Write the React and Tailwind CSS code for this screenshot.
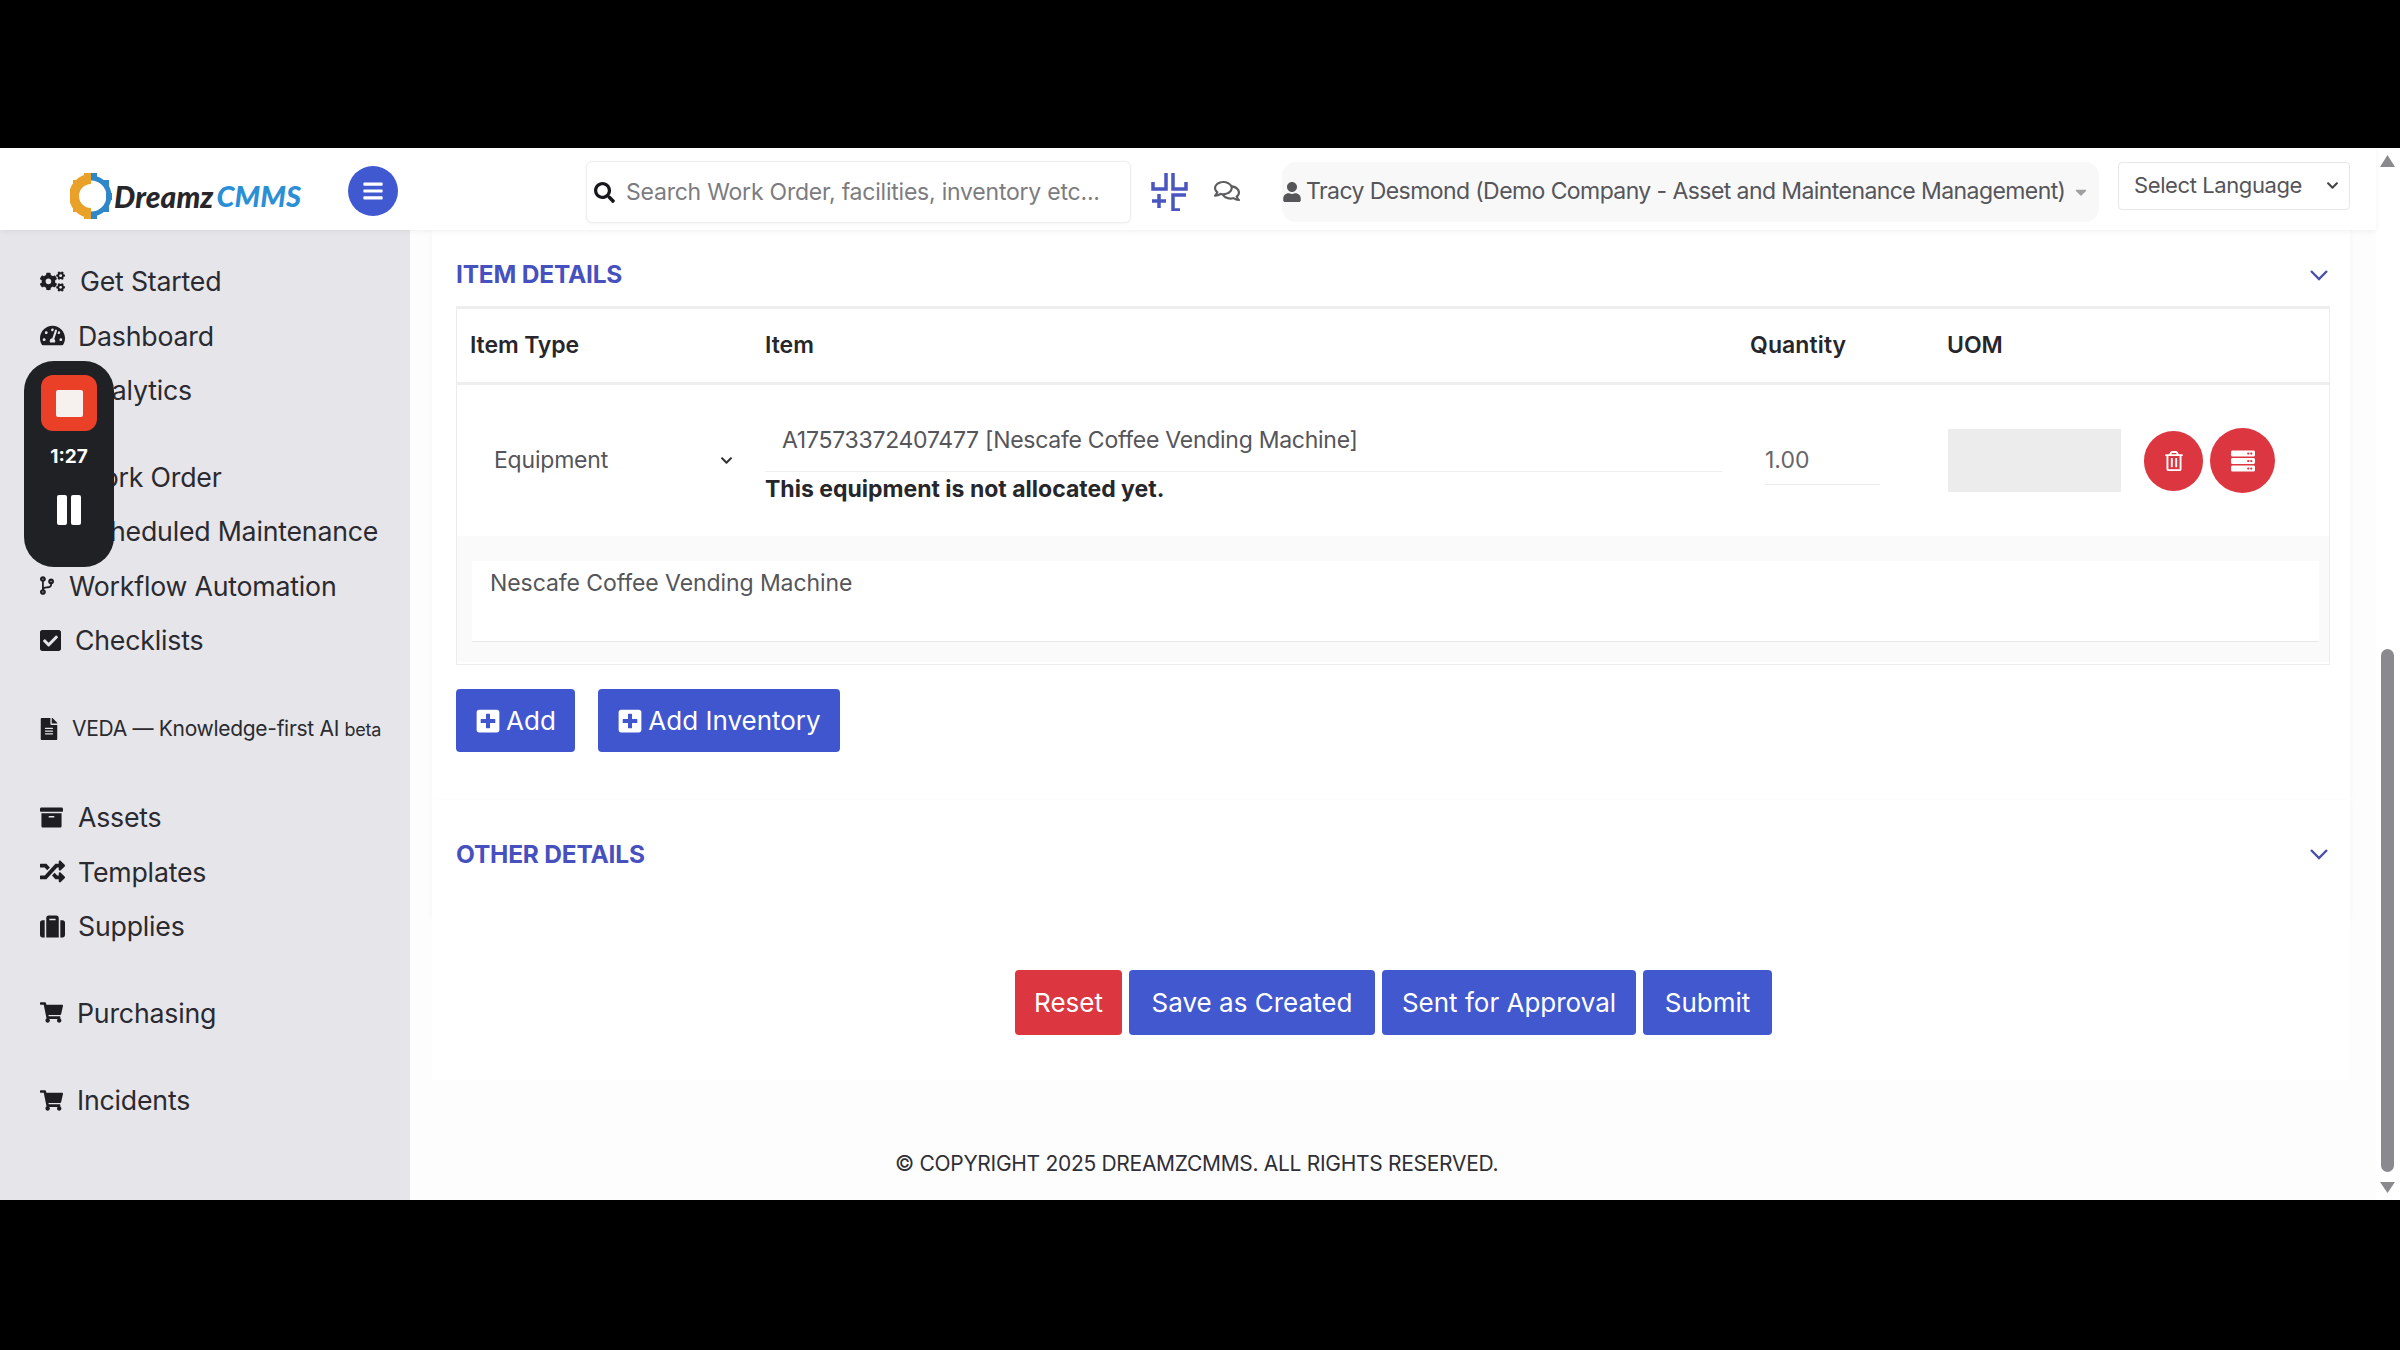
import React from "react";
import { FaCogs, FaTachometerAlt, FaChartBar, FaClipboardList, FaCalendarAlt, FaCodeBranch, FaCheckSquare, FaFileAlt, FaArchive, FaRandom, FaSuitcase, FaShoppingCart, FaSearch, FaUser, FaRegComments, FaPlusSquare, FaRegTrashAlt, FaServer, FaBars, FaCaretDown, FaChevronDown } from "react-icons/fa";

const font = { fontFamily: "Inter, 'Liberation Sans', sans-serif" };

const items = [
  { I: FaCogs, t: "Get Started", box: "w-[25px]", gap: "ml-[15px]", top: "" },
  { I: FaTachometerAlt, t: "Dashboard", box: "w-[25px]", gap: "ml-[13px]", top: "" },
  { I: FaChartBar, t: "Analytics", box: "w-[25px]", gap: "ml-[13px]", top: "" },
  { I: FaClipboardList, t: "Work Order", box: "w-[25px]", gap: "ml-[13px]", top: "mt-[32px]" },
  { I: FaCalendarAlt, t: "Scheduled Maintenance", box: "w-[25px]", gap: "ml-[13px]", top: "" },
  { I: FaCodeBranch, t: "Workflow Automation", box: "w-[14px]", gap: "ml-[15px]", top: "" },
  { I: FaCheckSquare, t: "Checklists", box: "w-[21px]", gap: "ml-[14px]", top: "" },
  { I: FaFileAlt, t: "VEDA — Knowledge-first AI", box: "w-[18px]", gap: "ml-[14px]", top: "mt-[34px]", small: true },
  { I: FaArchive, t: "Assets", box: "w-[23px]", gap: "ml-[15px]", top: "mt-[34px]" },
  { I: FaRandom, t: "Templates", box: "w-[25px]", gap: "ml-[13px]", top: "" },
  { I: FaSuitcase, t: "Supplies", box: "w-[25px]", gap: "ml-[13px]", top: "" },
  { I: FaShoppingCart, t: "Purchasing", box: "w-[23px]", gap: "ml-[14px]", top: "mt-[32px]" },
  { I: FaShoppingCart, t: "Incidents", box: "w-[23px]", gap: "ml-[14px]", top: "mt-[33px]" },
];

function Logo() {
  return (
    <div className="flex items-center ml-[70px] mt-[14px] w-[233px] h-[46px] shrink-0">
      <svg width="42" height="46" viewBox="0 0 42 46" className="shrink-0">
        <g fill="none">
          <path d="M21 6 A17 17 0 0 0 21 40" stroke="#e9a12a" strokeWidth="10" />
          <path d="M21 5 A18 18 0 0 1 21 41" stroke="#2f86c9" strokeWidth="5" />
        </g>
        <g fill="#e9a12a">
          <rect x="14" y="0" width="7" height="6" />
          <rect x="14" y="40" width="7" height="6" />
          <rect x="0" y="20" width="6" height="7" />
          <rect x="3" y="7" width="6" height="6" />
          <rect x="3" y="33" width="6" height="6" />
        </g>
        <g fill="#2f86c9">
          <rect x="21" y="0" width="6" height="6" />
          <rect x="21" y="40" width="6" height="6" />
          <rect x="36" y="20" width="6" height="7" />
          <rect x="33" y="7" width="6" height="6" />
          <rect x="33" y="33" width="6" height="6" />
        </g>
        <path d="M14 17 H22 A6 6 0 0 1 22 29 H14 L18 25 H21 A2 2 0 0 0 21 21 H18 Z" fill="#fff" />
      </svg>
      <span className="ml-[2px] text-[30px] font-black italic text-[#27272b] tracking-[0.1px] whitespace-nowrap" style={{ fontFamily: "Lato, sans-serif" }}>Dreamz</span>
      <span className="ml-[3px] text-[29px] font-black italic text-[#2b8fd6] tracking-[0px] whitespace-nowrap" style={{ fontFamily: "Lato, sans-serif" }}>CMMS</span>
    </div>
  );
}

function ExpandIcon() {
  return (
    <svg width="37" height="39" viewBox="0 0 37 39" fill="none" stroke="#4a55c0" strokeWidth="3.5" className="shrink-0">
      <path d="M15 1 V17 H2 V10" />
      <path d="M22 1 V17 H35 V10" />
      <path d="M1 29 H15 M8 22 V36" />
      <path d="M35 23 H22 V38 H29" />
    </svg>
  );
}

function Header() {
  return (
    <header className="h-[82px] shrink-0 flex items-center bg-white shadow-[0_2px_5px_rgba(0,0,0,0.05)] relative z-10">
      <Logo />
      <button className="ml-[45px] mt-[4px] w-[50px] h-[50px] shrink-0 rounded-full bg-[#4058d0] flex items-center justify-center text-white">
        <FaBars size={22} />
      </button>
      <div className="ml-[188px] w-[545px] h-[62px] mt-[6px] shrink-0 flex items-center border border-[#eeeeee] rounded-[6px] bg-white shadow-[0_1px_3px_rgba(0,0,0,0.05)]">
        <FaSearch size={21} className="ml-[7px] shrink-0 text-[#17171c]" />
        <span className="ml-[11px] text-[23px] text-[#7c7c80] whitespace-nowrap tracking-[-0.22px]">Search Work Order, facilities, inventory etc...</span>
      </div>
      <div className="ml-[20px] mt-[4px] shrink-0"><ExpandIcon /></div>
      <FaRegComments size={26} className="ml-[26px] mt-[4px] shrink-0 text-[#5c5c60]" />
      <div className="ml-[42px] w-[817px] h-[60px] mt-[5px] shrink-0 flex items-center rounded-[14px] bg-[#f8f8f8]">
        <FaUser size={20} className="text-[#55555a] shrink-0" />
        <span className="ml-[4px] text-[23px] text-[#55555a] whitespace-nowrap tracking-[-0.58px]">Tracy Desmond (Demo Company - Asset and Maintenance Management)</span>
        <FaCaretDown size={18} className="ml-[7px] shrink-0 text-[#a0a0a4]" />
      </div>
      <div className="ml-[19px] w-[232px] h-[48px] -mt-[7px] shrink-0 flex items-center justify-between bg-white border border-[#e6e6e6] rounded-[4px] pl-[15px] pr-[10px]">
        <span className="text-[22px] text-[#555559] tracking-[-0.4px] whitespace-nowrap">Select Language</span>
        <FaChevronDown size={13} className="text-[#444] shrink-0" />
      </div>
    </header>
  );
}

function Sidebar() {
  return (
    <aside className="w-[410px] shrink-0 bg-[#e5e5ea] pt-[24px] text-[#2a2a30]">
      {items.map(({ I, t, box, gap, top, small }) => (
        <div key={t} className={`h-[54.5px] flex items-center pl-[40px] ${top}`}>
          <span className={`${box} flex justify-start shrink-0 text-[#1d1d22]`}><I size={small ? 22 : 25} /></span>
          {small ? (
            <span className={`${gap} text-[21px] whitespace-nowrap tracking-[-0.3px]`}>{t} <span className="text-[18px]">beta</span></span>
          ) : (
            <span className={`${gap} text-[26.7px] whitespace-nowrap tracking-[-0.2px]`}>{t}</span>
          )}
        </div>
      ))}
    </aside>
  );
}

function Chevron() {
  return (
    <svg width="20" height="12" viewBox="0 0 20 12" fill="none" stroke="#4a50a8" strokeWidth="2.4" className="shrink-0">
      <path d="M2 2 L10 10 L18 2" />
    </svg>
  );
}

function Btn({ cls, children }) {
  return <button className={`flex items-center justify-center text-white text-[26px] whitespace-nowrap rounded-[4px] ${cls}`}>{children}</button>;
}

function Main() {
  return (
    <main className="flex-1 min-w-0 bg-[#fdfdfe]">
      <section className="ml-[22px] w-[1918px] h-[570px] pl-[24px] pr-[20px] bg-white shadow-[0_2px_6px_rgba(0,0,0,0.04)]">
        <div className="h-[79px] pt-[13px] pr-[1px] flex items-center justify-between border-b-[3px] border-[#eeeeee]">
          <span className="text-[24.5px] font-bold text-[#4650bf] tracking-[-0.2px]">ITEM DETAILS</span>
          <Chevron />
        </div>
        <div className="border-x border-b border-[#ececec] h-[356px]">
          <div className="h-[76px] flex items-center border-b-[3px] border-[#eeeeee] text-[23px] font-semibold text-[#26262b]">
            <span className="w-[308px] pl-[13px] tracking-[-0.1px]">Item Type</span>
            <span className="w-[985px]">Item</span>
            <span className="w-[197px] tracking-[0.1px]">Quantity</span>
            <span>UOM</span>
          </div>
          <div className="h-[151px] flex">
            <div className="w-[308px] relative flex items-center pl-[37px] text-[23px] text-[#55555a]">
              <span className="tracking-[-0.2px]">Equipment</span>
              <FaChevronDown size={13} className="absolute left-[263px] text-[#333]" />
            </div>
            <div className="w-[985px] pt-[24px]">
              <div className="w-[957px] h-[63px] flex items-center pl-[17px] border-b border-[#efefef] text-[23px] text-[#55555a] whitespace-nowrap tracking-[-0.27px]">
                A17573372407477 [Nescafe Coffee Vending Machine]
              </div>
              <div className="h-[34px] flex items-center text-[23px] font-bold text-[#26262b] whitespace-nowrap tracking-[0px]">This equipment is not allocated yet.</div>
            </div>
            <div className="w-[197px] flex items-center pl-[15px] text-[23px] text-[#66666a]">
              <div className="w-[115px] h-[48px] flex items-center border-b border-[#ececec]">1.00</div>
            </div>
            <div className="flex items-center">
              <div className="w-[173px] h-[63px] ml-[1px] bg-[#ececec]" />
              <button className="ml-[23px] w-[59px] h-[60px] rounded-full bg-[#dc3640] flex items-center justify-center text-white"><FaRegTrashAlt size={20} /></button>
              <button className="ml-[7px] w-[65px] h-[65px] rounded-full bg-[#dc3640] flex items-center justify-center text-white"><FaServer size={24} /></button>
            </div>
          </div>
          <div className="h-[126px] bg-[#fafafa] pt-[25px] pl-[15px] pr-[10px]">
            <div className="h-[81px] bg-white border-b border-[#e8e8e8] pl-[18px] pt-[5px] text-[23px] text-[#55555a] tracking-[-0.08px]">Nescafe Coffee Vending Machine</div>
          </div>
        </div>
        <div className="mt-[24px] flex gap-[23px]">
          <Btn cls="w-[119px] h-[63px] bg-[#3f56cf] gap-[5px]"><FaPlusSquare size={26} />Add</Btn>
          <Btn cls="w-[242px] h-[63px] bg-[#3f56cf] gap-[5px]"><FaPlusSquare size={26} />Add Inventory</Btn>
        </div>
      </section>
      <section className="ml-[22px] w-[1918px] h-[118px] pl-[24px] pr-[21px] pb-[10px] flex items-center justify-between bg-white shadow-[0_2px_6px_rgba(0,0,0,0.04)]">
        <span className="text-[24.5px] font-bold text-[#4650bf] tracking-[-0.2px]">OTHER DETAILS</span>
        <Chevron />
      </section>
      <section className="ml-[22px] w-[1918px] h-[162px] pt-[52px] pl-[583px] flex gap-[7px] items-start bg-white">
        <Btn cls="w-[107px] h-[65px] bg-[#dc3640]">Reset</Btn>
        <Btn cls="w-[246px] h-[65px] bg-[#4158cf]">Save as Created</Btn>
        <Btn cls="w-[254px] h-[65px] bg-[#4158cf]">Sent for Approval</Btn>
        <Btn cls="w-[129px] h-[65px] bg-[#4158cf]">Submit</Btn>
      </section>
      <footer className="h-[120px] pt-[48px] pl-[485px] flex items-center text-[21px] text-[#2f2f35] whitespace-nowrap tracking-[-0.3px]">
        © COPYRIGHT 2025 DREAMZCMMS. ALL RIGHTS RESERVED.
      </footer>
    </main>
  );
}

function Scrollbar() {
  return (
    <div className="w-[24px] pr-[2px] shrink-0 bg-white flex flex-col items-center">
      <svg width="15" height="12" viewBox="0 0 15 12" className="mt-[7px] shrink-0"><path d="M7.5 0 L15 12 H0 Z" fill="#8a8a8e" /></svg>
      <div className="mt-[482px] w-[13px] h-[523px] rounded-[7px] bg-[#8a8a8e] shrink-0" />
      <svg width="15" height="11" viewBox="0 0 15 11" className="mt-[10px] shrink-0"><path d="M0 0 H15 L7.5 11 Z" fill="#8a8a8e" /></svg>
    </div>
  );
}

function Recorder() {
  return (
    <div className="absolute left-[24px] top-[361px] z-20 w-[90px] h-[206px] rounded-[30px] bg-[#202124] flex flex-col items-center pt-[14px]">
      <div className="w-[56px] h-[56px] rounded-[12px] bg-[#ea4028] flex items-center justify-center">
        <div className="w-[27px] h-[27px] rounded-[2px] bg-[#f6f0ee]" />
      </div>
      <div className="mt-[14px] text-[19px] leading-[24px] font-bold text-white">1:27</div>
      <div className="mt-[26px] flex gap-[4px]">
        <div className="w-[10px] h-[30px] rounded-[2px] bg-white" />
        <div className="w-[10px] h-[30px] rounded-[2px] bg-white" />
      </div>
    </div>
  );
}

export default function App() {
  return (
    <div className="relative w-[2400px] h-[1350px] bg-black flex flex-col overflow-hidden" style={font}>
      <div className="h-[148px] shrink-0" />
      <div className="h-[1052px] shrink-0 flex">
        <div className="flex-1 min-w-0 flex flex-col">
          <Header />
          <div className="flex-1 min-h-0 flex overflow-hidden">
            <Sidebar />
            <Main />
          </div>
        </div>
        <Scrollbar />
      </div>
      <Recorder />
    </div>
  );
}
